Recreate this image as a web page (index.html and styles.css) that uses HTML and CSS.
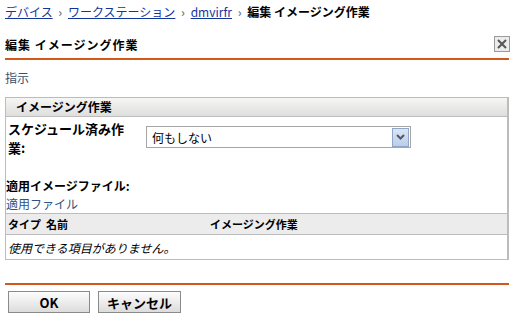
FILE: index.html
```html
<!DOCTYPE html>
<html lang="ja">
<head>
    <meta charset="UTF-8">
    <title>編集 イメージング作業</title>
    <link rel="stylesheet" href="styles.css">
</head>
<body>
    <div class="page">
        <div class="breadcrumb">
            <a href="#">デバイス</a>
            <span class="sep">&#x203A;</span>
            <a href="#">ワークステーション</a>
            <span class="sep">&#x203A;</span>
            <a href="#">dmvirfr</a>
            <span class="sep">&#x203A;</span>
            <b>編集 イメージング作業</b>
        </div>

        <div class="title-bar">
            <h2 class="title">編集 イメージング作業</h2>
            <button class="close-btn" title="閉じる">
                <svg width="10" height="10" viewBox="0 0 10 10"><path d="M1 1L9 9M9 1L1 9" stroke="#555" stroke-width="2"/></svg>
            </button>
        </div>

        <div class="hint">指示</div>

        <div class="section">
            <div class="section-head">イメージング作業</div>
            <div class="form-row">
                <label class="form-label">スケジュール済み作業:</label>
                <div class="select">
                    <span class="select-text">何もしない</span>
                    <span class="select-arrow">
                        <svg width="9" height="6" viewBox="0 0 9 6"><path d="M1 1L4.5 4.5L8 1" stroke="#4a5a78" stroke-width="2" fill="none"/></svg>
                    </span>
                </div>
            </div>
            <div class="files-label">適用イメージファイル:</div>
            <a class="files-link" href="#">適用ファイル</a>
            <table class="grid">
                <thead>
                    <tr>
                        <th class="col-type">タイプ</th>
                        <th class="col-name">名前</th>
                        <th>イメージング作業</th>
                    </tr>
                </thead>
                <tbody>
                    <tr>
                        <td class="empty" colspan="3">使用できる項目がありません。</td>
                    </tr>
                </tbody>
            </table>
        </div>

        <div class="actions">
            <button class="btn btn-ok">OK</button>
            <button class="btn">キャンセル</button>
        </div>
    </div>
</body>
</html>
```

FILE: styles.css
```css
body {
    margin: 0;
    padding: 0;
    background: white;
    font-family: 'Noto Sans CJK JP', 'DejaVu Sans', sans-serif;
    font-size: 12px;
    color: #000;
}
.page {
    width: 504px;
    padding-left: 5px;
}
.breadcrumb {
    height: 26px;
    line-height: 26px;
    margin-top: -1px;
    white-space: nowrap;
}
.breadcrumb a {
    color: #13349a;
    text-decoration: underline;
}
.breadcrumb .sep {
    color: #777;
    font-weight: 700;
    margin: 0 3px;
}
.title-bar {
    display: flex;
    justify-content: space-between;
    align-items: center;
    height: 28px;
    margin-top: 5px;
    border-bottom: 2px solid #d4581c;
}
.title {
    margin: 0;
    font-size: 12px;
    font-weight: 700;
    letter-spacing: 1px;
}
.close-btn {
    width: 16px;
    height: 16px;
    padding: 0;
    margin-right: -1px;
    border: 1px solid #9a9a9a;
    background: #ececec;
    display: flex;
    align-items: center;
    justify-content: center;
}
.hint {
    color: #3b4f6b;
    margin-top: 9px;
    height: 18px;
    line-height: 18px;
}
.section {
    margin-top: 10px;
    border: 1px solid #bcbcbc;
    border-right-width: 2px;
}
.section-head {
    height: 18px;
    line-height: 18px;
    padding-left: 10px;
    font-weight: 700;
    background: linear-gradient(#f6f6f5, #dededc);
    border-bottom: 1px solid #bcbcbc;
}
.form-row {
    display: flex;
    align-items: flex-start;
    padding-top: 2px;
    height: 58px;
}
.form-label {
    width: 126px;
    padding-left: 2px;
    font-weight: 700;
    line-height: 19px;
    font-size: 13px;
}
.select {
    display: flex;
    justify-content: space-between;
    align-items: center;
    width: 263px;
    height: 20px;
    margin-left: 12px;
    margin-top: 7px;
    border: 1px solid #a5a5a5;
    background: white;
}
.select-text {
    padding-left: 5px;
}
.select-arrow {
    width: 15px;
    height: 17px;
    margin-right: 1px;
    border: 1px solid #8ea7c9;
    background: linear-gradient(#dbe6f4, #bccde6);
    display: flex;
    align-items: center;
    justify-content: center;
}
.files-label {
    font-weight: 700;
    font-size: 12px;
    line-height: 18px;
}
.files-link {
    display: block;
    color: #2e5380;
    text-decoration: none;
    line-height: 18px;
}
.grid {
    width: 100%;
    border-collapse: collapse;
}
.grid th {
    height: 20px;
    background: #ececec;
    border-top: 1px solid #bcbcbc;
    border-bottom: 1px solid #bcbcbc;
    text-align: left;
    font-size: 11px;
    font-weight: 700;
    padding: 0 0 0 2px;
}
.grid .col-type {
    width: 36px;
}
.grid .col-name {
    width: 162px;
}
.grid .empty {
    height: 24px;
    padding: 0 0 0 2px;
    font-style: italic;
}
.actions {
    margin-top: 23px;
    border-top: 2px solid #d4581c;
    padding-top: 6px;
    display: flex;
    gap: 8px;
    padding-left: 3px;
}
.btn {
    width: 83px;
    height: 22px;
    padding: 0;
    border: 1px solid #8a8a8a;
    background: linear-gradient(#fdfdfd, #dcdcdc);
    font-family: 'Noto Sans CJK JP', 'DejaVu Sans', sans-serif;
    font-size: 13px;
    font-weight: 700;
    color: #000;
}
.btn-ok {
    width: 82px;
}
```
